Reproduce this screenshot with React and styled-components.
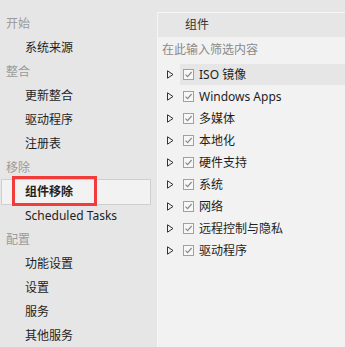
import React from 'react';
import styled, { createGlobalStyle, css } from 'styled-components';

const GlobalStyle = createGlobalStyle`
  html, body {
    margin: 0;
    padding: 0;
    background: #e6e6e6;
    font-family: "Noto Sans", "Noto Sans CJK SC", sans-serif;
  }
`;

const sidebar = [
  { type: 'group', label: '开始' },
  { type: 'item', label: '系统来源' },
  { type: 'group', label: '整合' },
  { type: 'item', label: '更新整合' },
  { type: 'item', label: '驱动程序' },
  { type: 'item', label: '注册表' },
  { type: 'group', label: '移除' },
  { type: 'item', label: '组件移除', active: true },
  { type: 'item', label: 'Scheduled Tasks' },
  { type: 'group', label: '配置' },
  { type: 'item', label: '功能设置' },
  { type: 'item', label: '设置' },
  { type: 'item', label: '服务' },
  { type: 'item', label: '其他服务' },
];

const components = [
  'ISO 镜像',
  'Windows Apps',
  '多媒体',
  '本地化',
  '硬件支持',
  '系统',
  '网络',
  '远程控制与隐私',
  '驱动程序',
];

export default function App() {
  return <Window>
    <GlobalStyle />
    <Sidebar>
      {sidebar.map((entry, i) => entry.type === 'group'
        ? <GroupLabel key={i}>{entry.label}</GroupLabel>
        : <NavItem key={i} $active={entry.active}>
            <NavLabel $active={entry.active}>{entry.label}</NavLabel>
          </NavItem>
      )}
    </Sidebar>
    <Panel>
      <PanelHeader>组件</PanelHeader>
      <Filter>在此输入筛选内容</Filter>
      <Tree>
        {components.map((name, i) => (
          <TreeRow key={name}>
            <Expander>
              <svg width="7" height="9" viewBox="0 0 7 9">
                <path d="M0.5 0.8 L6 4.5 L0.5 8.2 Z" fill="none" stroke="#333" strokeWidth="1" />
              </svg>
            </Expander>
            <RowBody $hovered={i === 0}>
              <CheckBox>
                <svg width="9" height="9" viewBox="0 0 9 9">
                  <path d="M1.5 4.6 L3.6 6.7 L7.6 2" fill="none" stroke="#8a8a8a" strokeWidth="1.2" />
                </svg>
              </CheckBox>
              <RowLabel>{name}</RowLabel>
            </RowBody>
          </TreeRow>
        ))}
      </Tree>
    </Panel>
  </Window>
}

const Window = styled.div`
  display: flex;
  width: 345px;
  height: 347px;
  overflow: hidden;
  background: #e6e6e6;
`;

const Sidebar = styled.div`
  display: flex;
  flex-direction: column;
  width: 157px;
  flex-shrink: 0;
  padding-top: 12px;
  box-sizing: border-box;
`;

const GroupLabel = styled.div`
  height: 24px;
  line-height: 24px;
  padding-left: 6px;
  font-size: 12px;
  color: #9a9a9a;
`;

const NavItem = styled.div`
  display: flex;
  align-items: center;
  height: 24px;
  padding-left: 23px;
  margin: -1px 6px -1px 1px;
  font-size: 12px;
  color: #1e1e1e;
  border: 1px solid transparent;
  ${p => p.$active && css`
    color: #222;
    font-weight: 700;
    background: #f2f2f2;
    border-color: #cfcfcf;
  `}
`;

const NavLabel = styled.span`
  position: relative;
  line-height: 24px;
  ${p => p.$active && css`
    &::after {
      content: '';
      position: absolute;
      left: -13px;
      top: -4px;
      width: 79px;
      height: 24px;
      border: 3px solid #f23b3b;
    }
  `}
`;

const Panel = styled.div`
  flex: 1;
  margin-top: 12px;
  display: flex;
  flex-direction: column;
  background: #f2f2f2;
  border-top: 1px solid #f7f7f7;
  border-left: 1px solid #f5f5f5;
`;

const PanelHeader = styled.div`
  height: 24px;
  line-height: 23px;
  padding-left: 27px;
  font-size: 12px;
  color: #333;
  background: #e6e6e6;
`;

const Filter = styled.div`
  height: 26px;
  line-height: 25px;
  padding-left: 4px;
  font-size: 12px;
  color: #8a8a8a;
`;

const Tree = styled.div`
  display: flex;
  flex-direction: column;
`;

const TreeRow = styled.div`
  display: flex;
  align-items: center;
  height: 22px;
`;

const Expander = styled.div`
  width: 22px;
  display: flex;
  justify-content: center;
  align-items: center;
  padding-left: 2px;
  box-sizing: border-box;
`;

const RowBody = styled.div`
  flex: 1;
  display: flex;
  align-items: center;
  height: 21px;
  padding-left: 3px;
  background: ${p => p.$hovered ? '#e6e6e6' : 'transparent'};
`;

const CheckBox = styled.span`
  width: 9px;
  height: 9px;
  border: 1px solid #a0a0a0;
  background: #f7f7f7;
  display: flex;
  align-items: center;
  justify-content: center;
  margin-right: 5px;
`;

const RowLabel = styled.span`
  font-size: 12px;
  color: #1e1e1e;
`;
